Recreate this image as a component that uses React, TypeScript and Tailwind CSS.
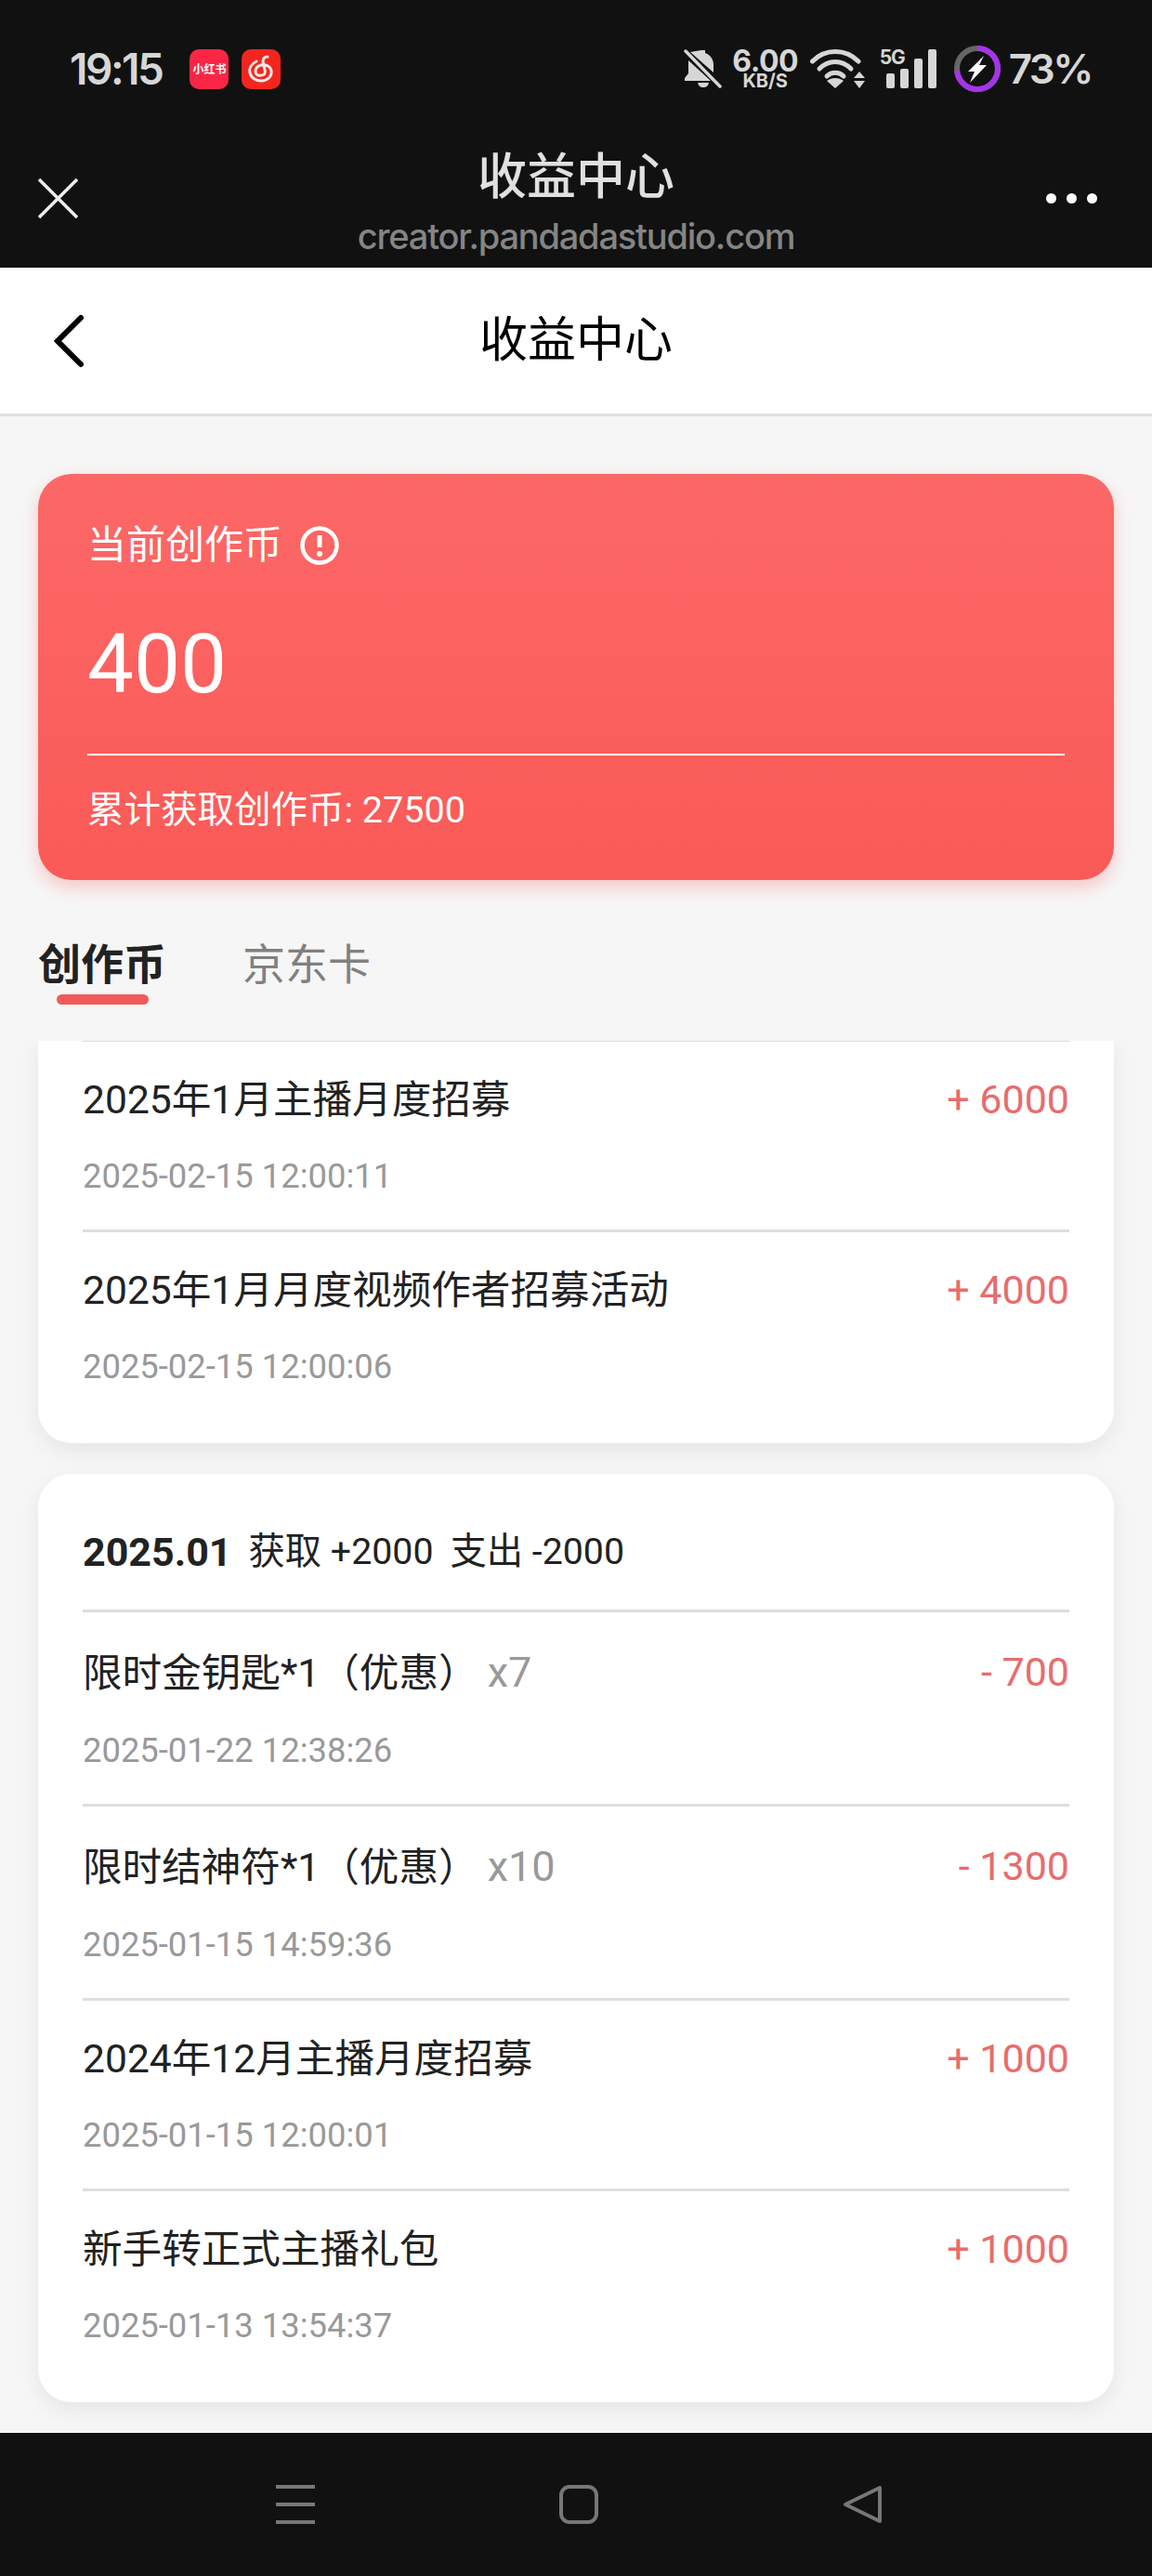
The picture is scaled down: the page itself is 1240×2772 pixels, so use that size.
const records = [
  { name: '2025年1月主播月度招募', amount: '+ 6000', time: '2025-02-15 12:00:11' },
  { name: '2025年1月月度视频作者招募活动', amount: '+ 4000', time: '2025-02-15 12:00:06' },
];

const januaryRecords = [
  { name: '限时金钥匙*1（优惠）', qty: 'x7', amount: '- 700', time: '2025-01-22 12:38:26' },
  { name: '限时结神符*1（优惠）', qty: 'x10', amount: '- 1300', time: '2025-01-15 14:59:36' },
  { name: '2024年12月主播月度招募', amount: '+ 1000', time: '2025-01-15 12:00:01' },
  { name: '新手转正式主播礼包', amount: '+ 1000', time: '2025-01-13 13:54:37' },
];

type Rec = { name: string; qty?: string; amount: string; time: string };

const Row = ({ item }: { item: Rec }) => (
  <div className={item.qty ? 'border-t-[3px] border-[#dedede] pt-[40px] pb-[34px]' : 'border-t-[3px] border-[#dedede] pt-[39px] pb-[34px]'}>
    <div className={item.qty ? 'flex justify-between items-center h-[50px]' : 'flex justify-between items-center h-[46px]'}>
      <div className="text-[42.6px] leading-[46px] text-[#222]">
        {item.name}
        {item.qty && <span className="ml-[10px] text-[45px] text-[#999]">{item.qty}</span>}
      </div>
      <div className={item.qty ? 'text-[43px] leading-[46px] text-[#e86c6c] -mt-[3px]' : 'text-[43px] leading-[46px] text-[#e86c6c]'}>{item.amount}</div>
    </div>
    <div className={item.qty ? 'mt-[36px] h-[46px] text-[36.4px] leading-[46px] text-[#999]' : 'mt-[37px] h-[46px] text-[36.4px] leading-[46px] text-[#999]'}>{item.time}</div>
  </div>
);

const StatusBar = () => (
  <div className="h-[148px] pl-[75px] pr-[65px] flex items-center justify-between font-['Inter','Noto_Sans_CJK_SC',sans-serif] text-[#d6d6d6]">
    <div className="flex items-center">
      <span className="text-[46px] font-semibold tracking-[-2.5px] leading-none">19:15</span>
      <div className="ml-[30px] w-[42px] h-[43px] rounded-[10px] bg-[#fb2645] flex items-center justify-center text-white text-[12px] font-bold leading-none font-['Noto_Sans_CJK_SC',sans-serif] whitespace-nowrap">小红书</div>
      <div className="ml-[14px] w-[42px] h-[43px] rounded-[10px] bg-[#f2261e]">
        <svg width="42" height="43" viewBox="0 0 42 43" fill="none" stroke="#ffe9e6" strokeWidth="3" strokeLinecap="round">
          <path d="M16 13C10 16 8 21 9 25C10 31 16 34 21 34C28 34 33 29 32 23C31 18 26 16 21 17C17 18 15 21 15 24C15 27 18 29 21 28C25 28 26 25 25 22L23 13C23 10 25 8 28 8" />
        </svg>
      </div>
    </div>
    <div className="flex items-center">
      <svg width="41" height="42" viewBox="0 0 41 42" fill="#d6d6d6">
        <path d="M19 1h4v3c6 2 9 7 9 13v8l-25-22zM5 12l24 22H1v-3l4-5z" />
        <path d="M15 36h12c-1 4-3 5-6 5s-5-1-6-5z" />
        <path d="M2 2l37 38" stroke="#d6d6d6" strokeWidth="3.5" strokeLinecap="round" />
      </svg>
      <div className="ml-[12px] w-[70px] flex flex-col items-center">
        <span className="text-[32px] font-bold leading-[27px] tracking-[-0.5px]">6.00</span>
        <span className="text-[20px] font-bold leading-[17px]">KB/S</span>
      </div>
      <svg className="ml-[13px]" width="59" height="42" viewBox="0 0 59 42" fill="none" stroke="#d6d6d6" strokeWidth="5" strokeLinecap="round">
        <path d="M2.5 13C16 -1 38 -1 52 13" />
        <path d="M10 21C20 11 34 11 44 21" />
        <path d="M18 29C23 24 31 24 36 29" />
        <path d="M27 42l-9-8c5-4 13-4 18 0z" fill="#d6d6d6" stroke="none" />
        <path d="M53 24l6 7H47zM53 42l-6-8h12z" fill="#d6d6d6" stroke="none" />
      </svg>
      <div className="ml-[16px] relative w-[60px] h-[42px] flex items-end">
        <span className="absolute left-0 top-0 text-[21px] font-bold leading-[18px] tracking-[-1px]">5G</span>
        <div className="flex items-end gap-[6px] ml-[7px]">
          <div className="w-[9px] h-[16px] rounded-[2px] bg-[#d6d6d6]" />
          <div className="w-[9px] h-[21px] rounded-[2px] bg-[#d6d6d6]" />
          <div className="w-[9px] h-[32px] rounded-[2px] bg-[#d6d6d6]" />
          <div className="w-[9px] h-[42px] rounded-[2px] bg-[#d6d6d6]" />
        </div>
      </div>
      <svg className="ml-[20px]" width="50" height="50" viewBox="0 0 50 50" fill="none">
        <circle cx="25" cy="25" r="22" stroke="#666" strokeWidth="6" />
        <circle cx="25" cy="25" r="22" stroke="#a534ea" strokeWidth="6" strokeDasharray="101 138.2" transform="rotate(-90 25 25)" />
        <path d="M32 11L15 28h7l-5 12 18-19h-8z" fill="#fff" />
      </svg>
      <span className="ml-[9px] text-[44px] font-semibold leading-none tracking-[-2.5px]">73%</span>
    </div>
  </div>
);

export default function App() {
  return (
    <div className="w-[1240px] h-[2772px] flex flex-col bg-[#f6f6f6] overflow-hidden font-['Roboto','Noto_Sans_CJK_SC',sans-serif]">
      <div className="h-[288px] bg-[#111]">
        <StatusBar />
        <div className="grid grid-cols-[1fr_auto_1fr] px-[41px] font-['Inter','Noto_Sans_CJK_SC',sans-serif]">
          <div className="pt-[44px]">
            <svg width="43" height="43" viewBox="0 0 43 43" stroke="#eee" strokeWidth="3.5">
              <path d="M1 1l41 41M42 1L1 42" />
            </svg>
          </div>
          <div className="flex flex-col items-center pt-[12px]">
            <div className="text-[53px] leading-[60px] font-medium text-[#e0e0e0]">收益中心</div>
            <div className="mt-[12px] text-[38px] leading-[44px] font-medium tracking-[-1.2px] text-[#858585]">creator.pandadastudio.com</div>
          </div>
          <div className="pt-[60px] pr-[18px] flex justify-end gap-[11px]">
            <div className="w-[11px] h-[11px] rounded-full bg-white" />
            <div className="w-[11px] h-[11px] rounded-full bg-white" />
            <div className="w-[11px] h-[11px] rounded-full bg-white" />
          </div>
        </div>
      </div>

      <div className="h-[160px] shrink-0 bg-white border-b-[3px] border-[#e0e0e0] relative flex items-center justify-center">
        <svg className="absolute left-[58px] top-[50px]" width="32" height="58" viewBox="0 0 32 58" fill="none" stroke="#000" strokeWidth="6" strokeLinecap="round">
          <path d="M29 4L4 29l25 25" />
        </svg>
        <span className="text-[52px] leading-[60px] text-black">收益中心</span>
      </div>

      <div className="mx-[41px] mt-[62px] h-[437px] shrink-0 rounded-[36px] bg-gradient-to-b from-[#fc6867] to-[#fa5a57] shadow-[0_8px_18px_rgba(250,90,88,0.3)] pt-[53px] px-[53px] text-white">
        <div className="flex items-center h-[48px]">
          <span className="text-[42px] leading-[48px]">当前创作币</span>
          <svg className="ml-[19px]" width="42" height="42" viewBox="0 0 42 42" fill="none">
            <circle cx="21" cy="21" r="18.5" stroke="#fff" strokeWidth="4.5" />
            <path d="M21 10v13" stroke="#fff" strokeWidth="5" />
            <circle cx="21" cy="30" r="3" fill="#fff" />
          </svg>
        </div>
        <div className="mt-[54px] text-[89px] leading-[100px]">400</div>
        <div className="mt-[46px] border-t-[2px] border-white" />
        <div className="mt-[34px] text-[39.5px] leading-[50px]">累计获取创作币: 27500</div>
      </div>

      <div className="h-[173px] shrink-0 pl-[41px] pt-[67px] flex items-start gap-[82px]">
        <div className="flex flex-col items-center">
          <span className="text-[46px] leading-[48px] font-bold text-[#222]">创作币</span>
          <div className="mt-[8px] ml-[1px] w-[99px] h-[11px] rounded-full bg-[#f15a5c]" />
        </div>
        <span className="text-[46px] leading-[48px] text-[#808080]">京东卡</span>
      </div>

      <div className="flex-1 overflow-hidden px-[41px]">
        <div className="-mt-[2px] bg-white rounded-[36px] rounded-t-none px-[48px] pb-[25px] shadow-[0_8px_24px_rgba(0,0,0,0.07)]">
          {records.map((r) => <Row key={r.time} item={r} />)}
        </div>
        <div className="mt-[33px] bg-white rounded-[36px] px-[48px] pb-[25px] shadow-[0_8px_24px_rgba(0,0,0,0.07)]">
          <div className="h-[146px] pt-[60px] flex items-start text-[39.3px] leading-[48px] text-[#222]">
            <span className="text-[43px] font-bold">2025.01</span>
            <span className="ml-[18px]">获取 +2000</span>
            <span className="ml-[18px]">支出 -2000</span>
          </div>
          {januaryRecords.map((r) => <Row key={r.time} item={r} />)}
        </div>
      </div>

      <div className="h-[154px] shrink-0 bg-[#111] pl-[297px] pt-[56px] flex items-start gap-[263px]">
        <div className="w-[42px] h-[42px] flex flex-col justify-between">
          <div className="h-[4px] bg-[#777]" />
          <div className="h-[4px] bg-[#777]" />
          <div className="h-[4px] bg-[#777]" />
        </div>
        <div className="w-[42px] h-[42px] rounded-[11px] border-[4px] border-[#777]" />
        <svg width="43" height="42" viewBox="0 0 43 42" fill="none" stroke="#777" strokeWidth="4" strokeLinejoin="round">
          <path d="M40 3v36L3 21z" />
        </svg>
      </div>
    </div>
  );
}
